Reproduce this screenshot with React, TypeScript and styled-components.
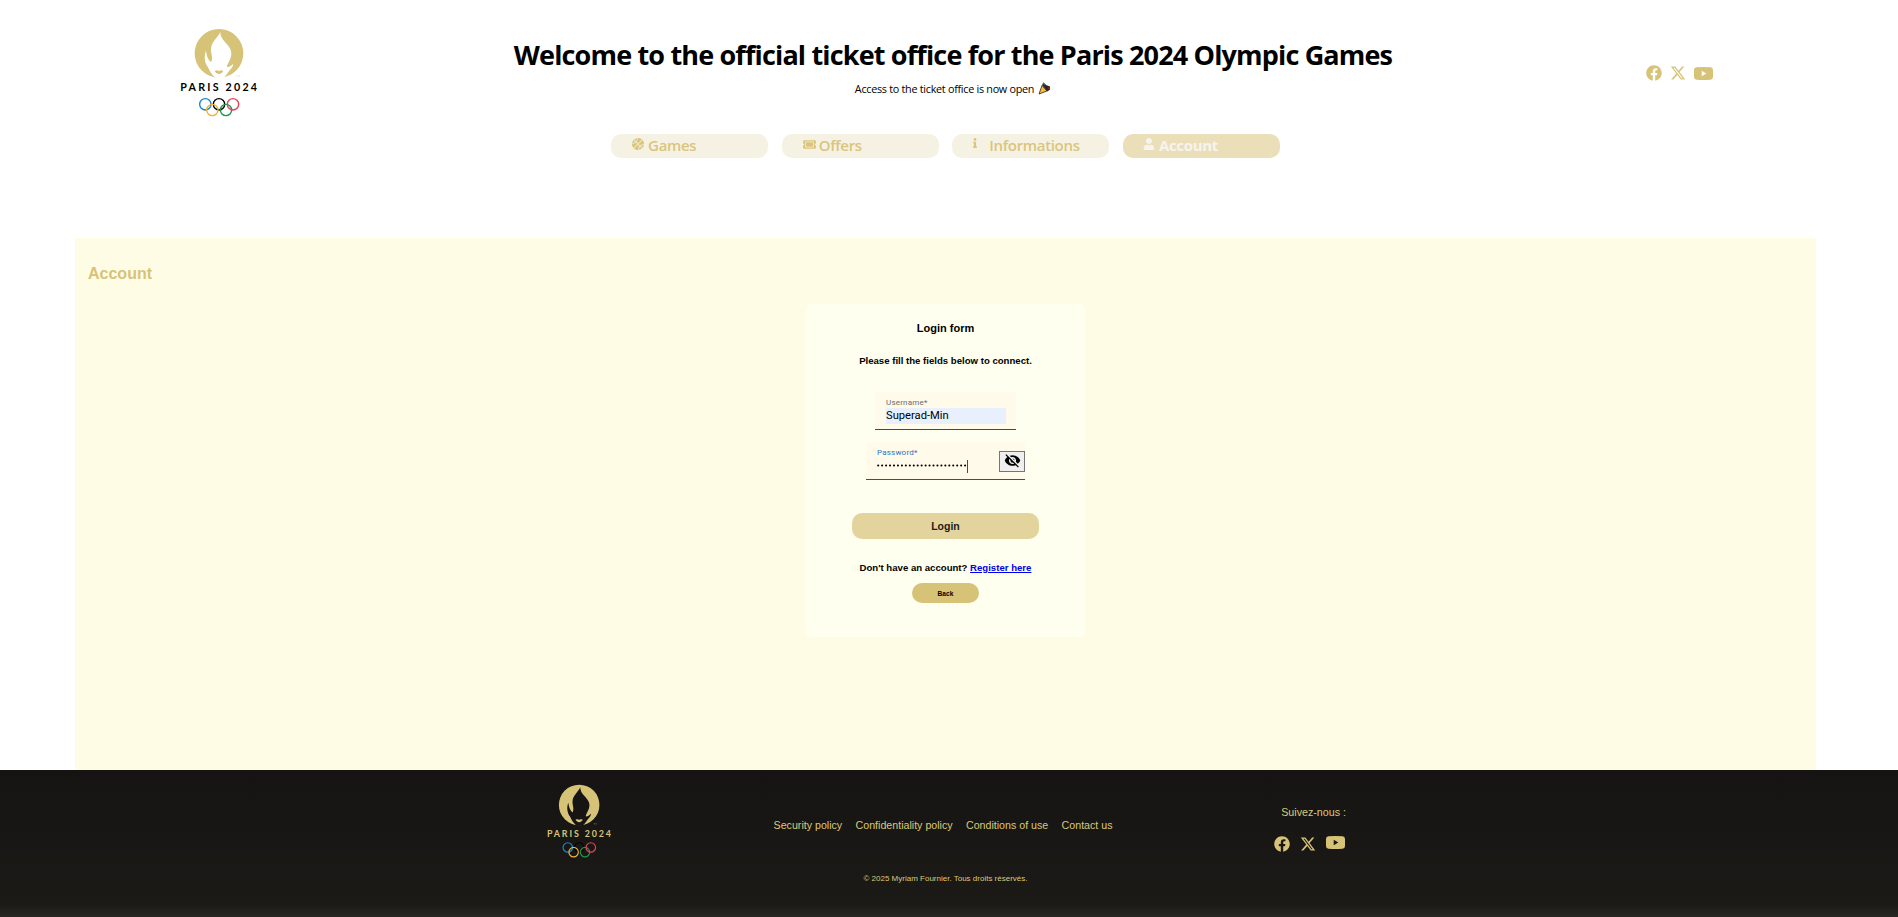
import React from 'react';
import styled, { createGlobalStyle } from 'styled-components';
import { FaInfo, FaUser, FaFacebook } from 'react-icons/fa';
import { FaBasketball, FaTicket, FaXTwitter } from 'react-icons/fa6';
import { MdVisibilityOff } from 'react-icons/md';

const gold = '#d7c378';
const arial = '"Liberation Sans", Arial, sans-serif';
const segoe = '"Open Sans", "Noto Sans", sans-serif';

const GlobalStyle = createGlobalStyle`
  * { box-sizing: border-box; }
  body { margin: 0; background: #fff; font-family: ${arial}; color: #000; }
`;

const Page = styled.div`
  height: 917px;
  display: flex;
  flex-direction: column;
  overflow: hidden;
`;
const Header = styled.header`height: 238px;`;
const TopRow = styled.div`
  display: flex;
  height: 134px;
  padding: 15px 0 0 160px;
`;
const Heading = styled.div`
  flex: 1;
  padding-top: 22px;
  text-align: center;
  font-family: ${segoe};
  white-space: nowrap;
`;
const Title = styled.h1`
  margin: 0 0 8px;
  font-size: 27px;
  font-weight: 700;
  line-height: 36px;
  letter-spacing: -0.84px;
`;
const Subtitle = styled.p`
  display: flex;
  justify-content: center;
  gap: 4px;
  margin: 0;
  font-size: 10.8px;
  line-height: 16px;
  letter-spacing: -0.28px;
`;
const Socials = styled.div<{ $top: number; $left?: number; $width?: number; $gap: number }>`
  display: flex;
  align-items: flex-start;
  gap: ${p => p.$gap}px;
  width: ${p => p.$width ?? 72}px;
  padding: ${p => p.$top}px 0 0 ${p => p.$left ?? 0}px;
  color: ${gold};
  svg { flex: none; display: block; }
`;
const Tube = styled.svg<{ $drop: number }>`margin-top: ${p => p.$drop}px;`;

const Nav = styled.nav`
  display: flex;
  justify-content: center;
  gap: 13.6px;
  padding-right: 7px;
`;
const Pill = styled.a<{ $active?: boolean; $gap: number; $inset?: number }>`
  display: flex;
  width: 157px;
  height: 24px;
  padding-left: ${p => p.$inset ?? 21}px;
  border-radius: 10px;
  background: ${p => (p.$active ? '#ebdfba' : '#f6f2e3')};
  color: ${p => (p.$active ? '#f6f4ee' : '#d9c57e')};
  font: ${p => (p.$active ? 700 : 600)} 15px/23px ${segoe};
  letter-spacing: -0.33px;
  svg { flex: none; margin: 4px ${p => p.$gap}px 0 0; }
`;

const Main = styled.main`
  height: 532px;
  margin: 0 82.5px 0 75px;
  padding: 26px 12.5px 0 13px;
  background: #fefce5;
`;
const PageTitle = styled.h2`
  margin: 0 0 20px;
  color: ${gold};
  font-size: 16px;
  line-height: 20px;
`;
const Card = styled.form`
  display: flex;
  flex-direction: column;
  align-items: center;
  width: 279px;
  height: 333px;
  margin: 0 auto;
  border-radius: 5px;
  background: #fffff0;
  font-weight: 700;
`;
const CardTitle = styled.h3`
  margin: 16px 0 0;
  font-size: 11px;
  line-height: 16px;
`;
const Hint = styled.p<{ $mt: number }>`
  margin: ${p => p.$mt}px 0 0;
  font-size: 9.6px;
  line-height: 12px;
  white-space: nowrap;
`;
const Link = styled.a`color: #0000ee; text-decoration: underline;`;
const Field = styled.div<{ $focus?: boolean }>`
  display: flex;
  justify-content: space-between;
  width: ${p => (p.$focus ? 159 : 141)}px;
  height: 38px;
  margin-top: ${p => (p.$focus ? 12 : 25)}px;
  padding: ${p => (p.$focus ? '5px 0 0 11px' : '5px 10px 0 11px')};
  border-radius: 3px 3px 0 0;
  border-bottom: 1px solid ${p => (p.$focus ? '#005cbb' : '#44474e')};
  background: #fffaea;
  font-family: Roboto, sans-serif;
  font-weight: 400;
`;
const FieldBody = styled.div<{ $w: number }>`width: ${p => p.$w}px;`;
const Label = styled.label<{ $focus?: boolean }>`
  display: block;
  height: 11px;
  font-size: 8px;
  line-height: 11px;
  letter-spacing: 0.2px;
  color: ${p => (p.$focus ? '#2a76c4' : '#6b6b70')};
`;
const Value = styled.div`
  height: 16px;
  background: #e8f0fe;
  font-size: 11.2px;
  line-height: 15px;
`;
const Dots = styled.svg`display: block; margin-top: 1px;`;
const Toggle = styled.button`
  display: flex;
  justify-content: center;
  width: 26px;
  height: 21px;
  margin-top: 4px;
  padding: 0;
  border: 1px solid #767676;
  background: #efefef;
  color: #000;
`;
const LoginButton = styled.button`
  width: 187px;
  height: 26px;
  margin-top: 33px;
  border: 0;
  border-radius: 10px;
  background: #e3d49e;
  color: #1d1c16;
  font: 700 10.5px/26px ${arial};
  padding: 0;
`;
const BackButton = styled.button`
  width: 67px;
  height: 20px;
  margin-top: 9px;
  padding: 1px 0 0;
  border: 0;
  border-radius: 10px;
  background: ${gold};
  color: #000;
  font: 700 6.6px/19px ${arial};
`;

const Footer = styled.footer`
  height: 147px;
  background: linear-gradient(#151412 0, #1b1a17 134px, #282724 147px);
  color: #dcc878;
`;
const FooterRow = styled.div`
  display: flex;
  height: 104px;
  padding: 3px 0 0 530px;
`;
const FooterLinks = styled.div`
  display: flex;
  gap: 13.4px;
  width: 356px;
  margin: 44px 0 0 143.6px;
  font-size: 10.65px;
  line-height: 16px;
  white-space: nowrap;
`;
const Follow = styled.div`
  width: 72px;
  margin: 32px 0 0 144.4px;
  text-align: right;
  font-size: 10.7px;
  line-height: 14px;
`;
const Copyright = styled.p`
  margin: 0;
  padding-right: 7px;
  text-align: center;
  font-size: 8px;
  line-height: 10px;
`;

const LogoSvg = styled.svg`display: block; flex: none;`;

function Logo({ width, ink, ground }: { width: number; ink: string; ground: string }) {
  return (
    <LogoSvg width={width} height={(width * 345) / 360} viewBox="0 0 360 345">
      <circle cx="177" cy="115" r="73" fill={gold} />
      <path
        fill={ground}
        d="M181 51 C174 68 153 80 153 104 C153 118 160 128 153 142 C143 133 140 122 138 107 C131 125 134 143 144 157 C149 170 157 180 167 190 L189 190 C199 182 204 172 209 166 C218 157 220 151 219 147 C213 154 206 157 201 156 C200 146 215 134 214 113 C212 88 180 78 181 51 Z"
      />
      <path fill={gold} d="M164 168 C170 165 173 166 177 168 C181 166 185 165 190 168 C184 180 170 180 164 168 Z" />
      <path d="M230 183 h4 M236 183 h4" stroke={gold} strokeWidth="3" opacity=".6" />
      <text x="61" y="229" textLength="230" lengthAdjust="spacing" fill={ink} fontFamily="Lato, sans-serif" fontWeight="700" fontSize="32">
        PARIS 2024
      </text>
      <g fill="none" strokeWidth="4.2">
        <circle cx="136" cy="268" r="17" stroke="#1a86cf" />
        <circle cx="177" cy="268" r="17" stroke="#000" />
        <circle cx="157" cy="285" r="17" stroke="#f7b03a" />
        <circle cx="198" cy="285" r="17" stroke="#169a50" />
        <circle cx="219" cy="268" r="17" stroke="#ea3f5a" />
      </g>
    </LogoSvg>
  );
}

interface SocialProps {
  top: number;
  drop: number;
  gap: number;
  left?: number;
  width?: number;
}

function SocialIcons({ top, left, width, drop, gap }: SocialProps) {
  return (
    <Socials $top={top} $left={left} $width={width} $gap={gap}>
      <FaFacebook size={16} />
      <FaXTwitter size={16} />
      <Tube $drop={drop} width="19" height="13" viewBox="0 0 19 13">
        <path
          fill="currentColor"
          fillRule="evenodd"
          d="M2.5 .2 Q9.5 -.2 16.5 .2 Q19 .4 19 3 V10 Q19 12.6 16.5 12.8 Q9.5 13.2 2.5 12.8 Q0 12.6 0 10 V3 Q0 .4 2.5 .2 Z M7.7 3.8 V9.3 L12.3 6.5 Z"
        />
      </Tube>
    </Socials>
  );
}

function Popper() {
  return (
    <svg width="13" height="14" viewBox="0 0 13 14">
      <path d="M4 4.5 L1 13 L9 10 Z" fill="#f8bd38" stroke="#2b2115" strokeWidth=".8" />
      <path d="M4 4 L5.500 1.500 L8 4 L12 5.500 L12 8.500 L9.500 10.500 Z" fill="#33211f" />
      <path d="M5 2 l2.500 2" stroke="#2b7795" strokeWidth="1.500" />
      <path d="M10 7 l2 .5" stroke="#8a2532" strokeWidth="1.500" />
    </svg>
  );
}

export default function App() {
  return (
    <>
      <GlobalStyle />
      <Page>
        <Header>
          <TopRow>
            <Logo width={120} ink="#000" ground="#fff" />
            <Heading>
              <Title>Welcome to the official ticket office for the Paris 2024 Olympic Games</Title>
              <Subtitle>
                <span>Access to the ticket office is now open</span>
                <Popper />
              </Subtitle>
            </Heading>
            <SocialIcons top={50} left={20} width={272} drop={2} gap={8} />
          </TopRow>
          <Nav>
            <Pill $gap={4}><FaBasketball size={12} />Games</Pill>
            <Pill $gap={3}><FaTicket size={13} />Offers</Pill>
            <Pill $gap={9} $inset={18}><FaInfo size={10} />Informations</Pill>
            <Pill $gap={4} $inset={20} $active><FaUser size={12} />Account</Pill>
          </Nav>
        </Header>
        <Main>
          <PageTitle>Account</PageTitle>
          <Card>
            <CardTitle>Login form</CardTitle>
            <Hint $mt={19}>Please fill the fields below to connect.</Hint>
            <Field>
              <FieldBody $w={120}>
                <Label>Username*</Label>
                <Value>Superad-Min</Value>
              </FieldBody>
            </Field>
            <Field $focus>
              <FieldBody $w={100}>
                <Label $focus>Password*</Label>
                <Dots width="92" height="14" viewBox="0 0 92 14">
                  <path d="M1.200 6.500 H89" stroke="#000" strokeWidth="2.100" strokeLinecap="round" strokeDasharray="0.010 3.940" />
                  <path d="M90.500 1 V14" stroke="#005cbb" />
                </Dots>
              </FieldBody>
              <Toggle type="button"><MdVisibilityOff size={17} /></Toggle>
            </Field>
            <LoginButton type="button">Login</LoginButton>
            <Hint $mt={23}>Don't have an account? <Link>Register here</Link></Hint>
            <BackButton type="button">Back</BackButton>
          </Card>
        </Main>
        <Footer>
          <FooterRow>
            <Logo width={100} ink={gold} ground="#161513" />
            <FooterLinks>
              <span>Security policy</span>
              <span>Confidentiality policy</span>
              <span>Conditions of use</span>
              <span>Contact us</span>
            </FooterLinks>
            <Follow>
              Suivez-nous :
              <SocialIcons top={17} drop={0} gap={10} />
            </Follow>
          </FooterRow>
          <Copyright>© 2025 Myriam Fournier. Tous droits réservés.</Copyright>
        </Footer>
      </Page>
    </>
  );
}
